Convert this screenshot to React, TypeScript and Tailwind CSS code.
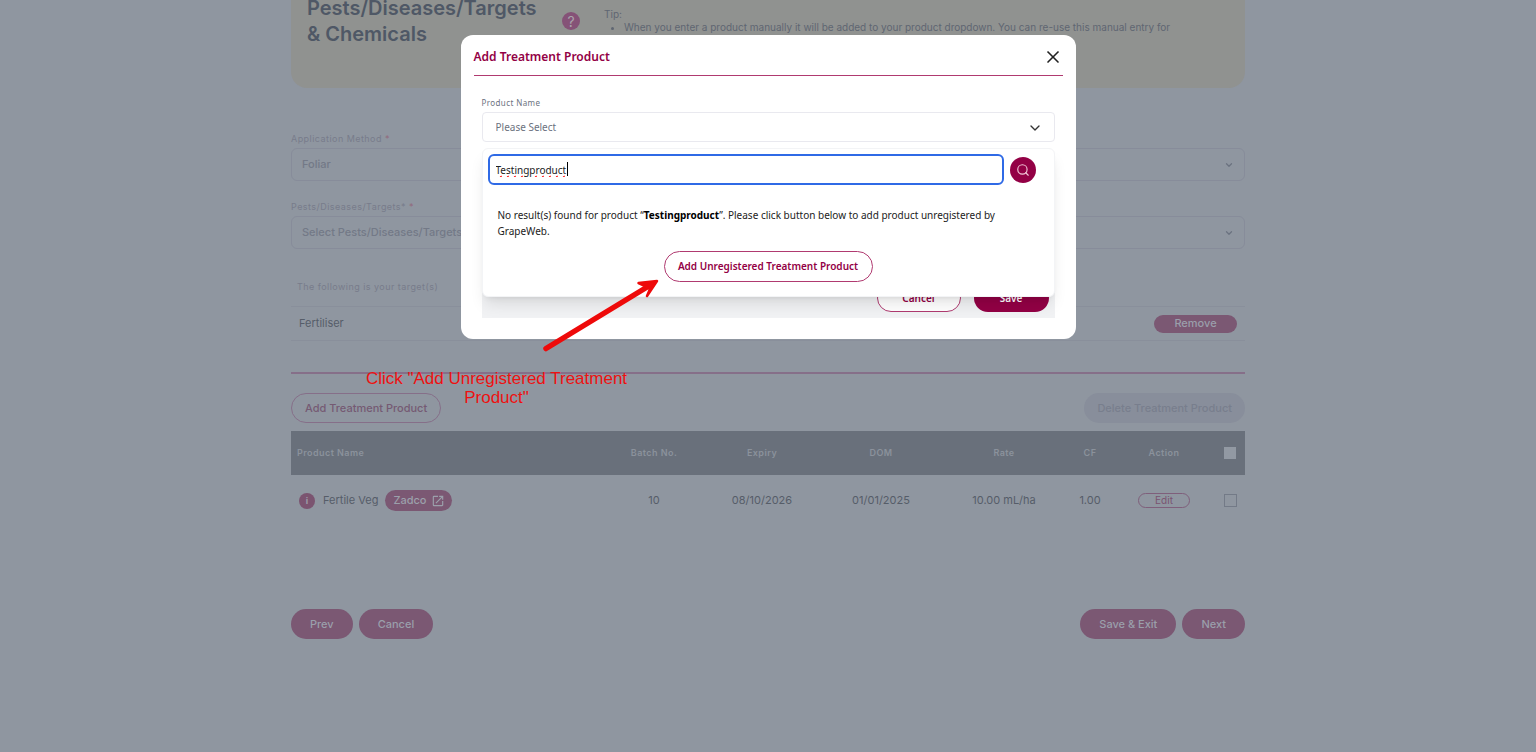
import React, { useState } from 'react';
import { ChevronDown, Search, X } from 'lucide-react';
import { MdOpenInNew } from 'react-icons/md';

const products = [
  {
    name: 'Fertile Veg',
    supplier: 'Zadco',
    batch: '10',
    expiry: '08/10/2026',
    dom: '01/01/2025',
    rate: '10.00 mL/ha',
    cf: '1.00'
  }
];

function PageSelect({ id, label, value }: { id: string; label: string; value: string }) {
  return (
    <div>
      <label htmlFor={id} className="block text-[9px] leading-[18px] tracking-wider text-[#787c8b]">
        {label} <span className="text-[#92697c]">*</span>
      </label>
      <div className="relative">
        <select
          id={id}
          className="block h-[33px] w-full appearance-none rounded-md border border-[#878c9a] px-[10px] text-[11px] font-medium text-[#737987]"
        >
          <option>{value}</option>
        </select>
        <ChevronDown className="pointer-events-none absolute right-[11px] top-3 h-[10px] w-[10px] text-[#6b7280]" strokeWidth={3} />
      </div>
    </div>
  );
}

function Banner() {
  return (
    <div className="-mt-5 flex h-[108px] rounded-2xl bg-[#909290] pl-4 pt-[15px]">
      <h1 className="w-[240px] text-[20px] font-semibold leading-[26px] text-[#4f5866]">
        Pests/Diseases/Targets &amp; Chemicals
      </h1>
      <button
        aria-label="Help"
        className="ml-[15px] mt-[17px] flex h-[18px] w-[18px] items-center justify-center rounded-full bg-[#855277] text-[14px] text-[#a9a4ab]"
      >
        ?
      </button>
      <div className="ml-6 mt-[13px] text-[10px] leading-[13px] text-[#5f6672]">
        <p>Tip:</p>
        <ul className="list-disc pl-5">
          <li>
            When you enter a product manually it will be added to your product dropdown. You can re-use this manual entry for
          </li>
        </ul>
      </div>
    </div>
  );
}

function ProductTable() {
  return (
    <table className="mt-2 w-full table-fixed text-center text-[11px] text-[#565d69]">
      <colgroup>
        <col />
        <col className="w-[98px]" />
        <col className="w-[118px]" />
        <col className="w-[120px]" />
        <col className="w-[126px]" />
        <col className="w-[46px]" />
        <col className="w-[102px]" />
        <col className="w-[30px]" />
      </colgroup>
      <thead className="bg-[#69707b] text-[9px] tracking-wider text-[#8b929c]">
        <tr className="h-11">
          <th className="pl-[6px] text-left font-semibold">Product Name</th>
          <th className="font-semibold">Batch No.</th>
          <th className="font-semibold">Expiry</th>
          <th className="font-semibold">DOM</th>
          <th className="font-semibold">Rate</th>
          <th className="font-semibold">CF</th>
          <th className="font-semibold">Action</th>
          <th>
            <input type="checkbox" aria-label="Select all" className="mx-auto block h-3 w-3 appearance-none bg-[#9299a3]" />
          </th>
        </tr>
      </thead>
      <tbody>
        {products.map((product) => (
          <tr key={product.name} className="h-[51px]">
            <td>
              <div className="flex items-center pl-2">
                <span className="flex h-4 w-4 items-center justify-center rounded-full bg-[#7b5470] text-[9px] font-bold text-[#9b9ba8]">
                  i
                </span>
                <span className="ml-2">{product.name}</span>
                <a href="#" className="ml-[7px] flex h-[21px] items-center gap-1 rounded-full bg-[#7b5873] pl-2 pr-[7px] font-medium text-[#9ba0ab]">
                  {product.supplier}
                  <MdOpenInNew className="h-[14px] w-[14px]" />
                </a>
              </div>
            </td>
            <td>{product.batch}</td>
            <td>{product.expiry}</td>
            <td>{product.dom}</td>
            <td>{product.rate}</td>
            <td>{product.cf}</td>
            <td>
              <button className="mx-auto block h-[15px] w-[52px] rounded-full border border-[#7f5f7b] text-[10px] leading-[13px] text-[#7a5370]">
                Edit
              </button>
            </td>
            <td>
              <input
                type="checkbox"
                aria-label={product.name}
                className="mx-auto block h-[13px] w-[13px] appearance-none border border-[#737a87]"
              />
            </td>
          </tr>
        ))}
      </tbody>
    </table>
  );
}

function PageButton({ children }: { children: React.ReactNode }) {
  return (
    <button className="h-[30px] rounded-full bg-[#7b5873] px-[19px] text-[11px] font-medium text-[#9a9fab]">{children}</button>
  );
}

function ProductDropdown() {
  const [term, setTerm] = useState('Testingproduct');

  return (
    <div className="absolute inset-x-0 top-full mt-[6px] h-[149px] rounded-md border border-gray-100 bg-white px-[5px] pt-[5px] shadow-lg">
      <div className="flex items-center gap-[6px] pr-[13px]">
        <div className="relative flex-1">
          <input
            type="text"
            aria-label="Search product"
            spellCheck={false}
            value={term}
            onChange={(e) => setTerm(e.target.value)}
            className="block h-[31px] w-full rounded-md border-2 border-[#2f6ae6] px-[6px] text-[10px] text-[#222] underline decoration-[#ff0000] decoration-wavy decoration-1 outline-none"
          />
          <span className="absolute left-[79px] top-2 h-[14px] w-px bg-black" />
        </div>
        <button aria-label="Search" className="flex h-[26px] w-[26px] items-center justify-center rounded-full bg-[#930045] text-[#f0c4d6]">
          <Search className="h-[14px] w-[14px]" strokeWidth={2} />
        </button>
      </div>
      <p className="mt-[22px] pl-[10px] pr-10 text-[10px] leading-4 text-[#222]">
        No result(s) found for product “<strong className="text-black">{term}</strong>”. Please click button below to add
        product unregistered by GrapeWeb.
      </p>
      <button className="mx-auto mt-3 block h-[31px] w-[209px] rounded-full border border-[#b03a70] text-[10px] font-semibold text-[#930045]">
        Add Unregistered Treatment Product
      </button>
    </div>
  );
}

function AddProductModal() {
  return (
    <div className="relative w-[615px] rounded-xl bg-white px-[13px] pb-[21px] font-['Noto_Sans',sans-serif]" role="dialog" aria-label="Add Treatment Product">
      <div className="flex h-[41px] items-center justify-between border-b border-[#b03a70]">
        <h2 className="pt-1 text-[12px] font-semibold text-[#930045]">Add Treatment Product</h2>
        <button aria-label="Close" className="pt-1 text-[#222]">
          <X className="h-5 w-5" strokeWidth={2} />
        </button>
      </div>
      <div className="px-2 pt-[18px]">
        <label htmlFor="product" className="block text-[8px] leading-[18px] tracking-wider text-[#6b7280]">
          Product Name
        </label>
        <div className="relative">
          <select
            id="product"
            className="block h-[30px] w-full appearance-none rounded-sm border border-[#e9e9ef] bg-white px-[13px] text-[10px] text-[#6b7280]"
          >
            <option>Please Select</option>
          </select>
          <ChevronDown className="pointer-events-none absolute right-3 top-2 h-4 w-4 text-[#333]" strokeWidth={2} />
          <ProductDropdown />
        </div>
        <div className="mt-[136px] flex justify-end gap-[13px] bg-[#f1f2f4] p-[6px] text-[10px] font-semibold">
          <button className="h-7 w-[84px] rounded-full border border-[#b03a70] bg-white text-[#930045]">Cancel</button>
          <button className="h-7 w-[75px] rounded-full bg-[#930045] text-white">Save</button>
        </div>
      </div>

      {/* callout */}
      <svg className="absolute left-[82px] top-[243px] h-[75px] w-[118px]" viewBox="0 0 118 75" fill="none" aria-hidden="true">
        <path d="M3 70.5L105 8.5" stroke="#ee0a0a" strokeWidth="5.5" strokeLinecap="round" />
        <path d="M114 3L95.5 5L102 8L107 11L104 18Z" fill="#ee0a0a" stroke="#ee0a0a" strokeWidth="2.5" strokeLinejoin="round" />
      </svg>
      <p className="absolute -left-[100px] top-[334px] w-[272px] text-center font-['Liberation_Sans',sans-serif] text-[17px] leading-[19px] text-[#ee1111]">
        Click "Add Unregistered Treatment Product"
      </p>
    </div>
  );
}

export default function App() {
  return (
    <div className="relative min-h-screen overflow-hidden bg-[#8f96a0] font-[Inter,sans-serif]">
      <main className="mx-auto max-w-[954px]">
        <Banner />
        <div className="mt-[42px] space-y-[17px]">
          <PageSelect id="method" label="Application Method" value="Foliar" />
          <PageSelect id="targets" label="Pests/Diseases/Targets*" value="Select Pests/Diseases/Targets" />
        </div>
        <p className="mt-[29px] pl-[6px] text-[9px] leading-[18px] tracking-wider text-[#787c8b]">The following is your target(s)</p>
        <div className="mt-[10px] flex h-[35px] items-center justify-between border-y border-[#898f9b] px-2 text-[11px] text-[#565d69]">
          <span>Fertiliser</span>
          <button className="h-[18px] w-[83px] rounded-full bg-[#7b5873] font-medium text-[#9a9fab]">Remove</button>
        </div>
        <hr className="mt-[31px] border-t-2 border-[#866f89]" />
        <div className="mt-[19px] flex justify-between text-[11px] font-medium">
          <button className="h-[30px] rounded-full border border-[#866f89] px-[13px] text-[#755a73]">Add Treatment Product</button>
          <button disabled className="h-[30px] rounded-full bg-[#888e9b] px-[13px] text-[#787e8d]">
            Delete Treatment Product
          </button>
        </div>
        <ProductTable />
        <div className="mt-[83px] flex justify-between">
          <div className="flex gap-[6px]">
            <PageButton>Prev</PageButton>
            <PageButton>Cancel</PageButton>
          </div>
          <div className="flex gap-[6px]">
            <PageButton>Save &amp; Exit</PageButton>
            <PageButton>Next</PageButton>
          </div>
        </div>
      </main>
      <div className="absolute inset-0 flex items-start justify-center pt-[35px]">
        <AddProductModal />
      </div>
    </div>
  );
}
